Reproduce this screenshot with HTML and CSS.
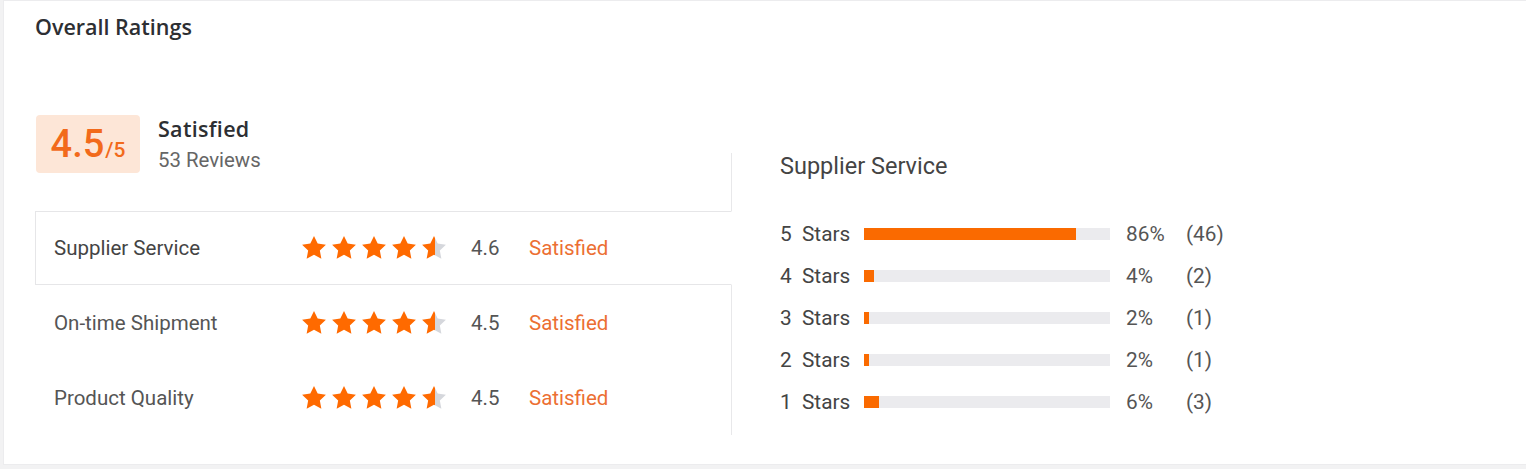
FILE: index.html
```html
<!DOCTYPE html>
<html lang="en">
<head>
<meta charset="utf-8">
<title>Overall Ratings</title>
<link rel="stylesheet" href="styles.css">
</head>
<body>
<svg class="defs" width="0" height="0" aria-hidden="true">
  <defs>
    <linearGradient id="half" x1="0" x2="1" y1="0" y2="0">
      <stop offset="54%" stop-color="#ff6a00"/>
      <stop offset="54%" stop-color="#d5d7dc"/>
    </linearGradient>
    <polygon id="star" points="12,1 15.4,7.9 23,9 17.4,14.3 18.8,22 12,18.3 5.2,22 6.6,14.3 1,9 8.6,7.9"/>
  </defs>
</svg>
<div class="card">
  <h2 class="title">Overall Ratings</h2>
  <div class="body">
    <div class="left">
      <div class="summary">
        <div class="score"><span class="big">4.5</span><span class="out">/5</span></div>
        <div class="summary-text">
          <div class="verdict">Satisfied</div>
          <div class="reviews">53 Reviews</div>
        </div>
      </div>
      <div class="list">
        <div class="row active">
          <span class="label">Supplier Service</span>
          <span class="stars">
            <svg viewBox="0 0 24 24"><use href="#star" fill="#ff6a00"/></svg>
            <svg viewBox="0 0 24 24"><use href="#star" fill="#ff6a00"/></svg>
            <svg viewBox="0 0 24 24"><use href="#star" fill="#ff6a00"/></svg>
            <svg viewBox="0 0 24 24"><use href="#star" fill="#ff6a00"/></svg>
            <svg viewBox="0 0 24 24"><use href="#star" fill="url(#half)"/></svg>
          </span>
          <span class="num">4.6</span>
          <span class="sat">Satisfied</span>
        </div>
        <div class="row">
          <span class="label">On-time Shipment</span>
          <span class="stars">
            <svg viewBox="0 0 24 24"><use href="#star" fill="#ff6a00"/></svg>
            <svg viewBox="0 0 24 24"><use href="#star" fill="#ff6a00"/></svg>
            <svg viewBox="0 0 24 24"><use href="#star" fill="#ff6a00"/></svg>
            <svg viewBox="0 0 24 24"><use href="#star" fill="#ff6a00"/></svg>
            <svg viewBox="0 0 24 24"><use href="#star" fill="url(#half)"/></svg>
          </span>
          <span class="num">4.5</span>
          <span class="sat">Satisfied</span>
        </div>
        <div class="row">
          <span class="label">Product Quality</span>
          <span class="stars">
            <svg viewBox="0 0 24 24"><use href="#star" fill="#ff6a00"/></svg>
            <svg viewBox="0 0 24 24"><use href="#star" fill="#ff6a00"/></svg>
            <svg viewBox="0 0 24 24"><use href="#star" fill="#ff6a00"/></svg>
            <svg viewBox="0 0 24 24"><use href="#star" fill="#ff6a00"/></svg>
            <svg viewBox="0 0 24 24"><use href="#star" fill="url(#half)"/></svg>
          </span>
          <span class="num">4.5</span>
          <span class="sat">Satisfied</span>
        </div>
      </div>
    </div>
    <div class="right">
      <h3 class="sub">Supplier Service</h3>
      <div class="bars">
        <div class="bar-row"><span class="blabel">5&nbsp;&nbsp;Stars</span><span class="track"><span class="fill" style="width:86%"></span></span><span class="pct">86%</span><span class="cnt">(46)</span></div>
        <div class="bar-row"><span class="blabel">4&nbsp;&nbsp;Stars</span><span class="track"><span class="fill" style="width:4%"></span></span><span class="pct">4%</span><span class="cnt">(2)</span></div>
        <div class="bar-row"><span class="blabel">3&nbsp;&nbsp;Stars</span><span class="track"><span class="fill" style="width:2%"></span></span><span class="pct">2%</span><span class="cnt">(1)</span></div>
        <div class="bar-row"><span class="blabel">2&nbsp;&nbsp;Stars</span><span class="track"><span class="fill" style="width:2%"></span></span><span class="pct">2%</span><span class="cnt">(1)</span></div>
        <div class="bar-row"><span class="blabel">1&nbsp;&nbsp;Stars</span><span class="track"><span class="fill" style="width:6%"></span></span><span class="pct">6%</span><span class="cnt">(3)</span></div>
      </div>
    </div>
  </div>
</div>
</body>
</html>
```

FILE: styles.css
```css
html, body {
  margin: 0;
  padding: 0;
  overflow: hidden;
}
body {
  background: #f2f2f3;
  font-family: Roboto, "Liberation Sans", Arial, sans-serif;
  color: #333;
  height: 469px;
}
.defs {
  position: absolute;
  width: 0;
  height: 0;
}
.card {
  margin-left: 3px;
  width: 1540px;
  height: 465px;
  box-sizing: border-box;
  background: #fff;
  border: 1px solid #ececee;
  border-right: none;
  padding: 12px 0 0 31px;
}
.title {
  margin: 0;
  font-family: "Open Sans", Roboto, sans-serif;
  font-size: 21.5px;
  line-height: 28px;
  font-weight: 600;
  color: #2d2f33;
}
.body {
  display: flex;
  align-items: flex-end;
  margin-top: 74px;
}
.left {
  width: 696px;
  flex: none;
}
.summary {
  display: flex;
  align-items: flex-start;
  gap: 18px;
  margin-left: 1px;
}
.score {
  width: 104px;
  height: 58px;
  box-sizing: border-box;
  background: #fde6d7;
  border-radius: 4px;
  display: flex;
  align-items: baseline;
  justify-content: center;
  padding-top: 9px;
  color: #f26a1b;
}
.score .big {
  font-size: 38px;
  line-height: 40px;
  font-weight: 500;
}
.score .out {
  font-size: 21px;
  font-weight: 500;
  margin-left: 1px;
}
.verdict {
  font-family: "Open Sans", Roboto, sans-serif;
  font-size: 21.5px;
  line-height: 28px;
  font-weight: 600;
  letter-spacing: 0.3px;
  color: #2d2f33;
}
.reviews {
  font-size: 20.4px;
  line-height: 30px;
  color: #666;
  margin-top: 2px;
}
.list {
  margin-top: 36px;
}
.row {
  display: flex;
  align-items: center;
  height: 75px;
  box-sizing: border-box;
  padding-left: 19px;
  font-size: 20.5px;
  color: #555;
}
.row.active {
  height: 74px;
  border: 1px solid #e6e6e8;
  border-right: 1px solid #fff;
  margin-right: -1px;
  padding-left: 18px;
  position: relative;
  z-index: 1;
  background: #fff;
  color: #444;
}
.label {
  width: 247px;
  flex: none;
}
.stars {
  display: flex;
  gap: 4px;
  width: 146px;
  flex: none;
}
.stars svg {
  width: 26px;
  height: 26px;
  display: block;
}
.num {
  margin-left: 24px;
  width: 58px;
  flex: none;
  color: #555;
}
.sat {
  color: #ec6f33;
}
.right {
  flex: 1;
  border-left: 1px solid #e8e8ea;
  height: 282px;
  box-sizing: border-box;
  padding-left: 48px;
}
.sub {
  margin: 0;
  font-size: 23.5px;
  line-height: 26px;
  font-weight: 400;
  color: #444;
}
.bars {
  margin-top: 34px;
}
.bar-row {
  display: flex;
  align-items: center;
  height: 42px;
  font-size: 20.8px;
  color: #444;
}
.blabel {
  width: 84px;
  flex: none;
}
.track {
  width: 246px;
  height: 12px;
  background: #ebebee;
  flex: none;
  display: flex;
}
.fill {
  background: #fa6a00;
  height: 100%;
}
.pct {
  margin-left: 16px;
  width: 60px;
  flex: none;
  color: #555;
}
.cnt {
  color: #555;
}
```
